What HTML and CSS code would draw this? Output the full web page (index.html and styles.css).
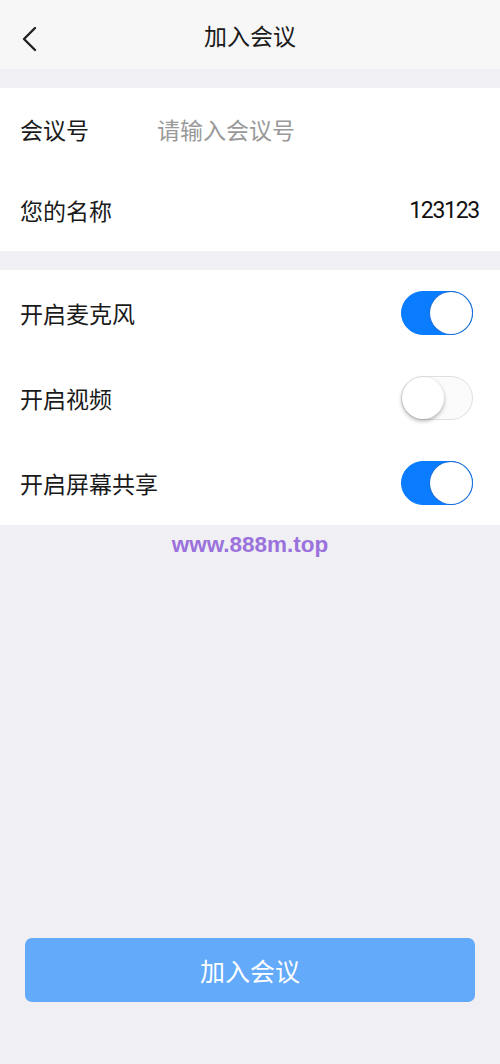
FILE: index.html
```html
<!DOCTYPE html>
<html lang="zh">
<head>
<meta charset="utf-8">
<link rel="stylesheet" href="styles.css">
</head>
<body>
<div class="page">
  <header class="nav">
    <span class="back"><svg width="18" height="26" viewBox="0 0 18 26"><path d="M15 2 L4 13 L15 24" fill="none" stroke="#222" stroke-width="2.4" stroke-linecap="round" stroke-linejoin="round"/></svg></span>
    <h1 class="title">加入会议</h1>
  </header>
  <section class="group first">
    <div class="row row-input">
      <span class="label">会议号</span>
      <span class="placeholder">请输入会议号</span>
    </div>
    <div class="row row-input">
      <span class="label">您的名称</span>
      <span class="value">123123</span>
    </div>
  </section>
  <section class="group second">
    <div class="row row-switch">
      <span class="label">开启麦克风</span>
      <span class="switch on"><span class="knob"></span></span>
    </div>
    <div class="row row-switch">
      <span class="label">开启视频</span>
      <span class="switch"><span class="knob"></span></span>
    </div>
    <div class="row row-switch">
      <span class="label">开启屏幕共享</span>
      <span class="switch on"><span class="knob"></span></span>
    </div>
  </section>
  <div class="watermark">www.888m.top</div>
  <div class="spacer"></div>
  <div class="footer">
    <button class="join">加入会议</button>
  </div>
</div>
</body>
</html>
```
FILE: styles.css
```css
* { box-sizing: border-box; }
html, body { margin: 0; padding: 0; }
body {
  width: 500px;
  height: 1064px;
  background: #efeff4;
  font-family: "Noto Sans CJK SC", "Noto Sans", sans-serif;
  color: #1a1a1a;
}
.page {
  display: flex;
  flex-direction: column;
  height: 1064px;
}
.nav {
  height: 69px;
  background: #f7f7f7;
  display: flex;
  align-items: center;
  justify-content: center;
  position: relative;
}
.back {
  position: absolute;
  left: 20px;
  top: 26px;
  display: flex;
}
.title {
  margin: 0;
  font-size: 23px;
  font-weight: 400;
  color: #1a1a1a;
}
.group {
  background: #fff;
  padding: 0 20px;
}
.group.first { margin-top: 19px; }
.group.second { margin-top: 19px; }
.row {
  display: flex;
  align-items: center;
  font-size: 23px;
}
.row-input { height: 81.5px; }
.row-switch { height: 85px; justify-content: space-between; }
.row-input .label { width: 137px; }
.placeholder { color: #999; }
.value {
  margin-left: auto;
  color: #111;
  font-family: Roboto, "Noto Sans", sans-serif;
  font-size: 23px;
  letter-spacing: -1.3px;
  margin-right: 1px;
}
.switch {
  width: 72px;
  height: 44px;
  border-radius: 22px;
  background: #fbfbfb;
  border: 1px solid #e0e0e0;
  position: relative;
  display: block;
  margin-right: 7px;
}
.switch .knob {
  position: absolute;
  top: 0px;
  left: 0px;
  width: 42px;
  height: 42px;
  border-radius: 50%;
  background: #fff;
  box-shadow: 0 2px 4px rgba(0,0,0,0.3);
}
.switch.on {
  background: #0a7cff;
  border-color: #0a7cff;
}
.switch.on .knob {
  left: 28px;
  box-shadow: 0 0 0 1px #1d6ed6;
}
.watermark {
  text-align: center;
  margin-top: 7px;
  font-family: "Liberation Sans", Arial, sans-serif;
  font-weight: 700;
  font-size: 22.5px;
  color: #9b72dc;
}
.spacer { flex: 1; }
.footer {
  padding: 0 25px 62px;
}
.join {
  width: 100%;
  height: 64px;
  border: none;
  border-radius: 7px;
  background: #64aafa;
  color: #fff;
  font-family: "Noto Sans CJK SC", sans-serif;
  font-size: 25px;
  display: block;
}
```
